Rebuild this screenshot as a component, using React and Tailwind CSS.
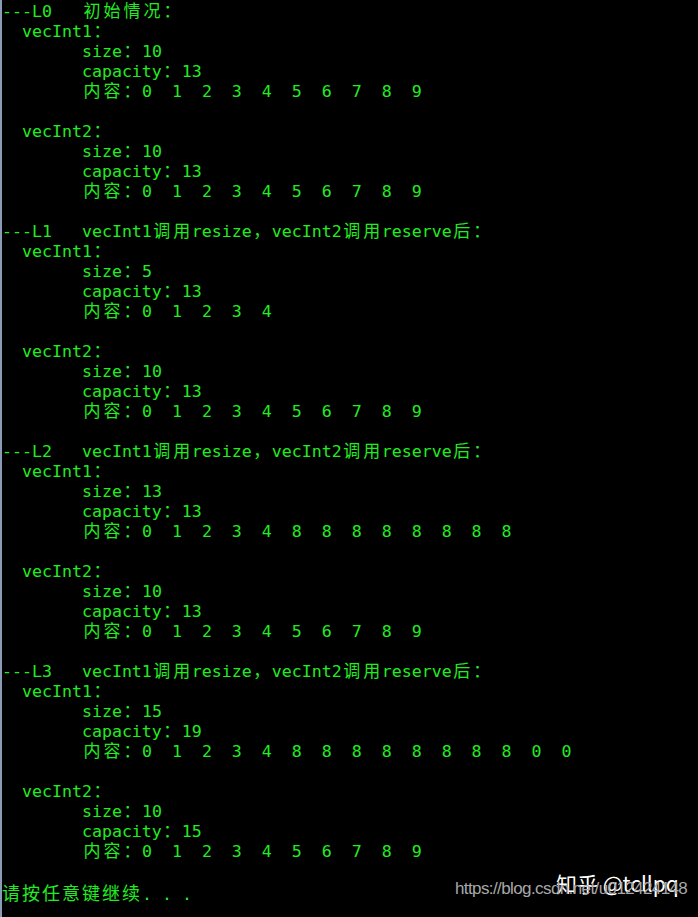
const nums = (arr) => arr.join("  ");

const block = (vec, size, cap, items) => [
  `  ${vec}：`,
  `        size：${size}`,
  `        capacity：${cap}`,
  `        内容：${nums(items)}`,
  "",
];

const zeroToNine = [0, 1, 2, 3, 4, 5, 6, 7, 8, 9];
const step = "vecInt1调用resize，vecInt2调用reserve后：";

const lines = [
  "---L0   初始情况：",
  ...block("vecInt1", 10, 13, zeroToNine),
  ...block("vecInt2", 10, 13, zeroToNine),
  `---L1   ${step}`,
  ...block("vecInt1", 5, 13, [0, 1, 2, 3, 4]),
  ...block("vecInt2", 10, 13, zeroToNine),
  `---L2   ${step}`,
  ...block("vecInt1", 13, 13, [0, 1, 2, 3, 4, 8, 8, 8, 8, 8, 8, 8, 8]),
  ...block("vecInt2", 10, 13, zeroToNine),
  `---L3   ${step}`,
  ...block("vecInt1", 15, 19, [0, 1, 2, 3, 4, 8, 8, 8, 8, 8, 8, 8, 8, 0, 0]),
  ...block("vecInt2", 10, 15, zeroToNine),
];

// split a line into ascii runs (10px cells) and wide chars (20px cells)
const splitRuns = (text) => {
  const runs = [];
  let buf = "";
  for (const ch of text) {
    if (ch.charCodeAt(0) > 0x2000) {
      if (buf) runs.push({ wide: false, t: buf });
      buf = "";
      runs.push({ wide: true, t: ch });
    } else {
      buf += ch;
    }
  }
  if (buf) runs.push({ wide: false, t: buf });
  return runs;
};

const Line = ({ text }) => (
  <div className="h-[20px] whitespace-pre flex items-baseline">
    {splitRuns(text).map((r, i) =>
      r.wide ? (
        <span
          key={i}
          className="inline-block w-[20px] text-center text-[17px] leading-[20px] font-['Noto_Sans_CJK_SC',sans-serif]"
        >
          {r.t}
        </span>
      ) : (
        <span key={i} className="text-[16.6px] leading-[20px] font-['DejaVu_Sans_Mono',monospace]">
          {r.t}
        </span>
      )
    )}
  </div>
);

export default function App() {
  return (
    <div className="relative w-[698px] h-[917px] bg-black border-l-2 border-[#8a9bb8] overflow-hidden text-[#22ec22]">
      {lines.map((l, i) => (
        <Line key={i} text={l} />
      ))}
      <div className="h-[24px] flex items-baseline whitespace-pre">
        <span className="text-[18px] leading-[24px] font-['Noto_Sans_CJK_SC',sans-serif] tracking-[2px]">
          请按任意键继续
        </span>
        <span className="text-[16.6px] leading-[24px] font-['DejaVu_Sans_Mono',monospace]">. . .</span>
      </div>

      {/* watermarks */}
      <div className="absolute left-[554px] top-[868px] text-white text-[21px] font-['Noto_Sans_CJK_SC',sans-serif] whitespace-nowrap">
        知乎 @tcllpq
      </div>
      <div className="absolute left-[453px] top-[876px] text-[#a8a8a8] text-[17px] tracking-[-0.6px] font-['Liberation_Sans',sans-serif] whitespace-nowrap">
        https://blog.csdn.net/u012424148
      </div>
    </div>
  );
}
